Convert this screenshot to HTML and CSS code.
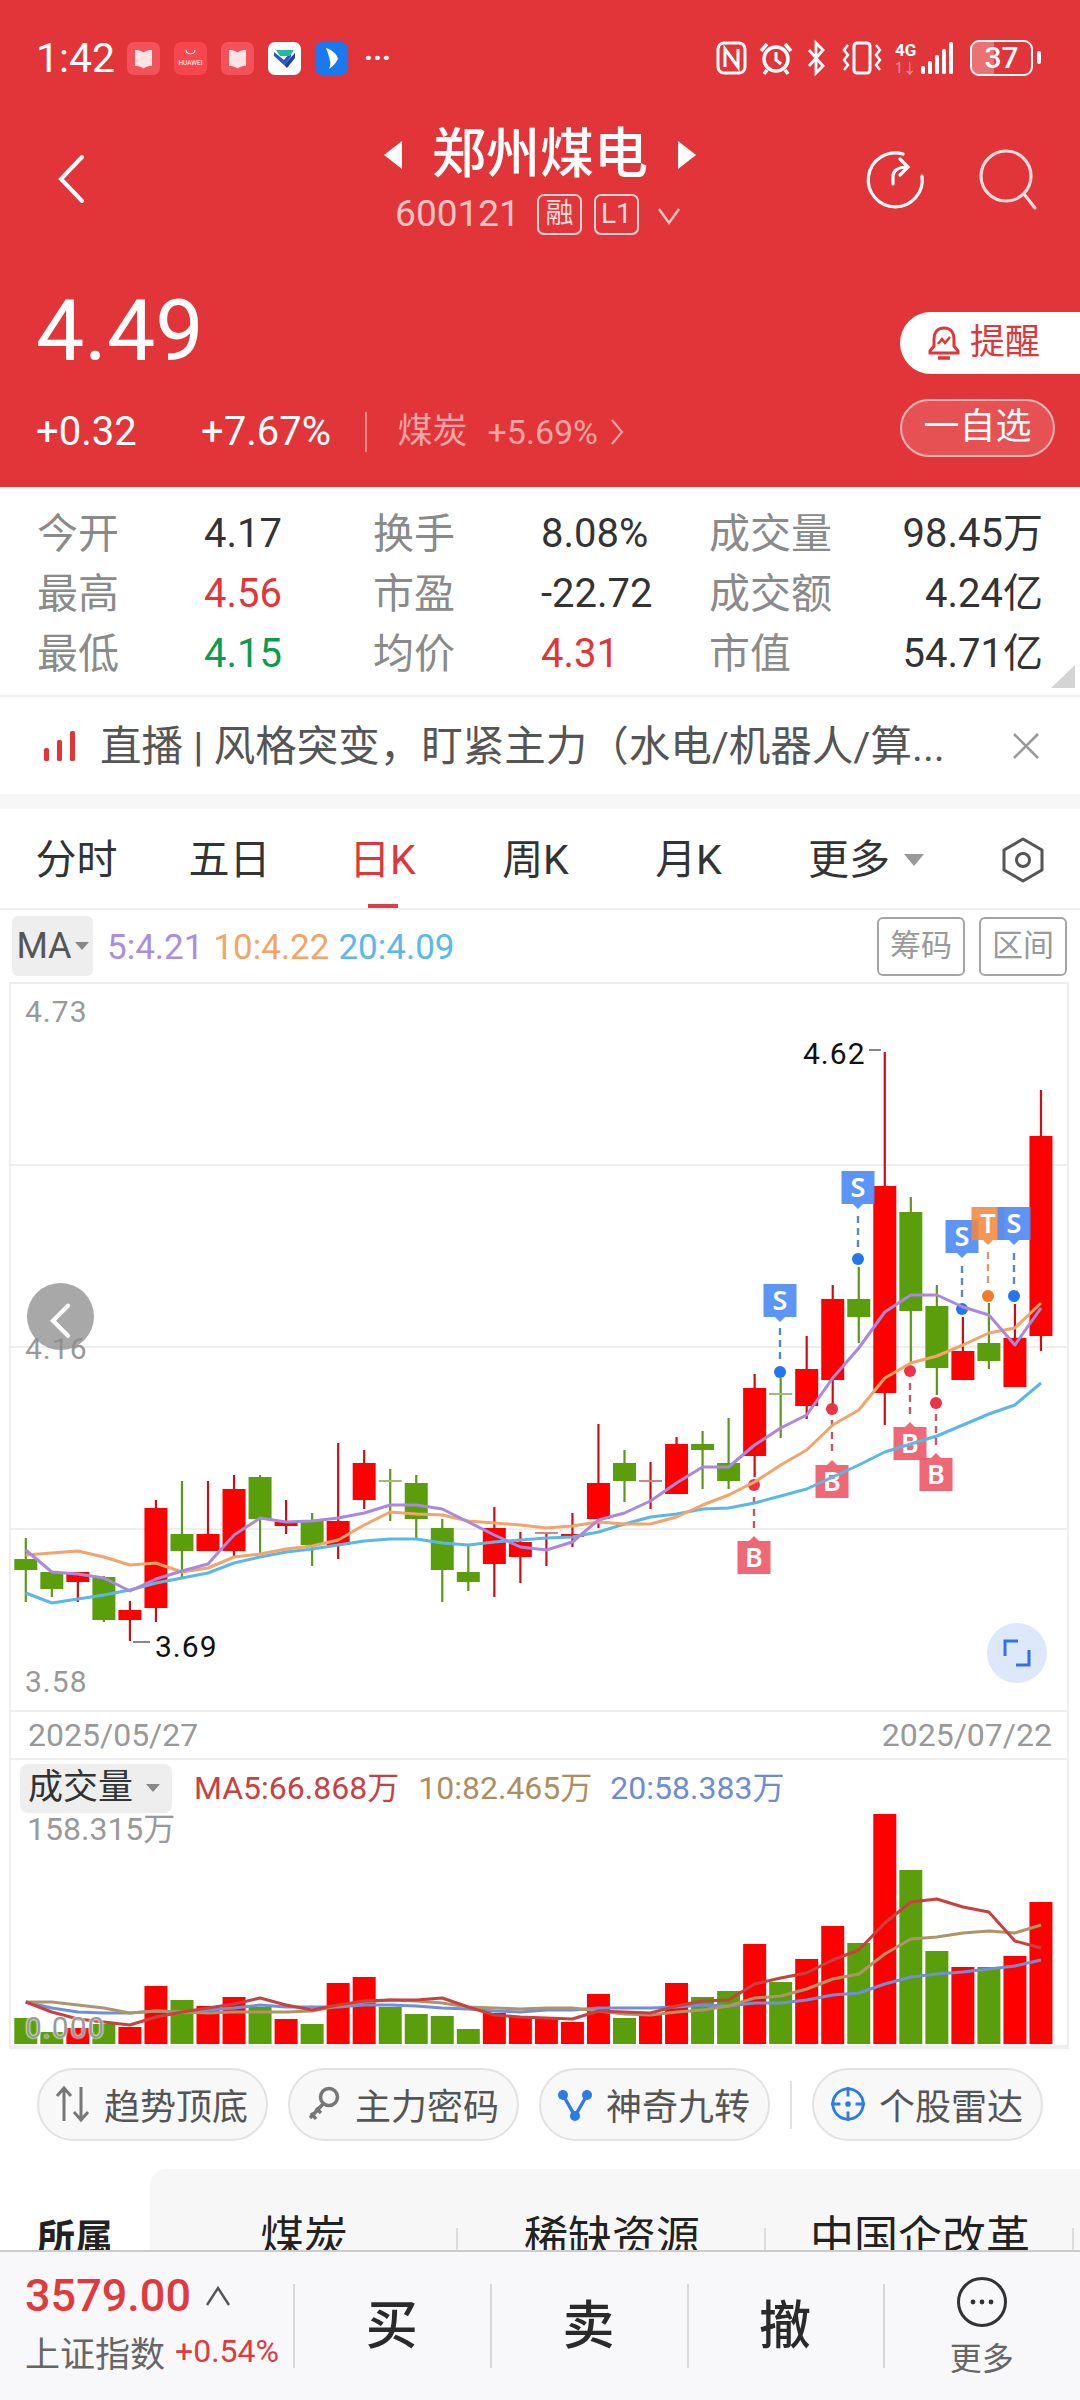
FILE: index.html
```html
<!DOCTYPE html>
<html lang="zh-CN">
<head>
  <meta charset="UTF-8" />
  <meta name="viewport" content="width=device-width, initial-scale=1.0" />
  <title>郑州煤电 600121</title>
  <link rel="stylesheet" href="styles.css">
</head>
<body>
  <!-- 红色行情头部 -->
  <header class="quote-head">
    <div class="status-bar">
      <span class="clock">1:42</span>
      <div class="app-icons">
        <svg class="app-icon" viewBox="0 0 33 33"><rect width="33" height="33" rx="7" fill="#f4525a"/><path d="M8 8c3 0 6 .5 8.500 2.500C19 8.500 22 8 25 8v16c-3 0-6 .5-8.500 2.500C14 24.500 11 24 8 24z" fill="#fbe3e3"/></svg>
        <svg class="app-icon" viewBox="0 0 33 33"><rect width="33" height="33" rx="7" fill="#f7464e"/><path d="M12 8c.5 5 8.500 5 9 0" fill="none" stroke="#fff" stroke-width="1.200"/><text x="16.500" y="23" class="huawei-text">HUAWEI</text></svg>
        <svg class="app-icon" viewBox="0 0 33 33"><rect width="33" height="33" rx="7" fill="#f4525a"/><path d="M8 8c3 0 6 .5 8.500 2.500C19 8.500 22 8 25 8v16c-3 0-6 .5-8.500 2.500C14 24.500 11 24 8 24z" fill="#fbe3e3"/></svg>
        <svg class="app-icon" viewBox="0 0 33 33"><rect width="33" height="33" rx="7" fill="#fff"/><path d="M6 14l10 9 7-8v-3c-3 1-5 3-7 6l-10-8z" fill="#2a56c6"/><path d="M8 8h18l-4 6H12z" fill="#27b8a4"/><path d="M16 23l11-12v5l-8 10z" fill="#1d3f9e"/></svg>
        <svg class="app-icon" viewBox="0 0 33 33"><rect width="33" height="33" rx="7" fill="#1a78f0"/><path d="M11 6c6 2 11 6 12 11-2 4-5 7-9 10 1-3 2-6 1-8-1-5-2-8-4-13z" fill="#fff"/></svg>
      </div>
      <span class="more-dots">···</span>
      <div class="sys-icons">
        <svg class="sys-nfc" viewBox="0 0 31 34"><rect x="2" y="2" width="27" height="30" rx="6" fill="none" stroke="#fff" stroke-width="3"/><path d="M9 26V8l13 18V8" fill="none" stroke="#fff" stroke-width="3"/></svg>
        <svg class="sys-alarm" viewBox="0 0 34 34"><circle cx="17" cy="18" r="12" fill="none" stroke="#fff" stroke-width="3.500"/><path d="M17 11v8l5 4" fill="none" stroke="#fff" stroke-width="3"/><path d="M2 10l6-7M32 10l-6-7M8 29l-3 4M26 29l3 4" stroke="#fff" stroke-width="3.500" fill="none"/></svg>
        <svg class="sys-bt" viewBox="0 0 18 34"><path d="M2 9l14 16-7 7V2l7 7L2 25" fill="none" stroke="#fff" stroke-width="2.800"/></svg>
        <svg class="sys-vib" viewBox="0 0 42 34"><rect x="13" y="2" width="16" height="30" rx="3" fill="none" stroke="#fff" stroke-width="3"/><path d="M7 4L3 9l4 5-4 5 4 5-4 5M35 4l4 5-4 5 4 5-4 5 4 5" fill="none" stroke="#fff" stroke-width="2.500"/></svg>
        <svg class="sys-signal" viewBox="0 0 60 34"><text x="0" y="15" class="net-text">4G</text><text x="0" y="32" class="net-sub">1↓</text><rect x="26" y="25" width="4" height="8" rx="1.500" fill="#fff"/><rect x="33" y="20" width="4" height="13" rx="1.500" fill="#fff"/><rect x="40" y="14" width="4" height="19" rx="1.500" fill="#fff"/><rect x="47" y="8" width="4" height="25" rx="1.500" fill="#fff"/><rect x="54" y="1" width="4" height="32" rx="1.500" fill="#fff"/></svg>
        <div class="battery"><span class="battery-level"></span><span class="battery-num">37</span></div>
      </div>
    </div>

    <div class="title-row">
      <svg class="nav-back" viewBox="0 0 30 50"><path d="M26 3L5 25l21 22" fill="none" stroke="#fff" stroke-width="4" stroke-linecap="round"/></svg>
      <div class="title-mid">
        <div class="stock-name"><i class="tri-left"></i>郑州煤电<i class="tri-right"></i></div>
        <div class="stock-code">600121<span class="code-tag">融</span><span class="code-tag">L1</span>
          <svg class="code-arrow" viewBox="0 0 24 18"><path d="M2 2l10 14L22 2" fill="none" stroke="#f8c4c4" stroke-width="2.400"/></svg>
        </div>
      </div>
      <div class="title-tools">
        <svg class="tool-share" viewBox="0 0 60 60"><path d="M38 6a27 27 0 1 0 19 22" fill="none" stroke="#fff" stroke-width="3.200" stroke-linecap="round"/><path d="M28 36v-8c0-5 5-9 14-9M35 11l8 8-8 8" fill="none" stroke="#fff" stroke-width="3.200" stroke-linecap="round"/></svg>
        <svg class="tool-search" viewBox="0 0 62 62"><circle cx="28" cy="28" r="25" fill="none" stroke="#fbdcdc" stroke-width="3.200"/><path d="M46 46l11 14" stroke="#fbdcdc" stroke-width="3.200" stroke-linecap="round"/></svg>
      </div>
    </div>

    <div class="price-row">
      <div class="price-left">
        <div class="last-price">4.49</div>
        <div class="change-row">
          <span class="chg-val">+0.32</span>
          <span class="chg-pct">+7.67%</span>
          <i class="chg-sep"></i>
          <span class="sector-name">煤炭</span>
          <span class="sector-pct">+5.69%</span>
          <svg class="sector-arrow" viewBox="0 0 14 28"><path d="M2 2l10 12L2 26" fill="none" stroke="#f8a8a8" stroke-width="2"/></svg>
        </div>
      </div>
      <div class="price-btns">
        <div class="btn-alert">
          <svg class="bell" viewBox="0 0 32 36"><path d="M16 3c-7 0-10 5-10 11v7l-4 5v2h28v-2l-4-5v-7c0-6-3-11-10-11z" fill="none" stroke="#e23539" stroke-width="3"/><path d="M10 33h12" stroke="#e23539" stroke-width="3.500"/><path d="M10 19l4-5 3 4 5-6" fill="none" stroke="#e23539" stroke-width="2.500"/></svg>
          <span>提醒</span>
        </div>
        <div class="btn-watch">一自选</div>
      </div>
    </div>
  </header>

  <!-- 盘口数据 -->
  <section class="stats">
    <span class="st-label">今开</span><span class="st-val">4.17</span>
    <span class="st-label">换手</span><span class="st-val">8.08%</span>
    <span class="st-label">成交量</span><span class="st-val st-right">98.45万</span>
    <span class="st-label">最高</span><span class="st-val up">4.56</span>
    <span class="st-label">市盈</span><span class="st-val">-22.72</span>
    <span class="st-label">成交额</span><span class="st-val st-right">4.24亿</span>
    <span class="st-label">最低</span><span class="st-val down">4.15</span>
    <span class="st-label">均价</span><span class="st-val up">4.31</span>
    <span class="st-label">市值</span><span class="st-val st-right">54.71亿</span>
    <i class="stats-corner"></i>
  </section>

  <section class="news">
    <svg class="news-bars" viewBox="0 0 32 30"><rect x="0" y="17" width="5" height="13" rx="1.500"/><rect x="13" y="9" width="5" height="21" rx="1.500"/><rect x="26" y="0" width="5" height="30" rx="1.500"/></svg>
    <span class="news-text">直播 | 风格突变，盯紧主力（水电/机器人/算...</span>
    <svg class="news-close" viewBox="0 0 28 28"><path d="M2 2l24 24M26 2L2 26" stroke="#999" stroke-width="2.600"/></svg>
  </section>
  <div class="gap-band"></div>

  <!-- 周期切换 -->
  <nav class="period-tabs">
    <span class="ptab">分时</span>
    <span class="ptab">五日</span>
    <span class="ptab active">日K</span>
    <span class="ptab">周K</span>
    <span class="ptab">月K</span>
    <span class="ptab ptab-more">更多<i class="more-tri"></i></span>
    <svg class="hex-icon" viewBox="0 0 44 46"><path d="M22 2l19 11v20L22 44 3 33V13z" fill="none" stroke="#555" stroke-width="3" stroke-linejoin="round"/><circle cx="22" cy="23" r="6.500" fill="none" stroke="#555" stroke-width="3"/></svg>
  </nav>

  <div class="ma-row">
    <div class="ma-chip">MA<i class="chip-tri"></i></div>
    <span class="ma-5">5:4.21</span>
    <span class="ma-10">10:4.22</span>
    <span class="ma-20">20:4.09</span>
    <span class="ma-btn ma-btn-first">筹码</span>
    <span class="ma-btn">区间</span>
  </div>

  <!-- K线图 -->
  <section class="kline-box">
    <svg id="klineSvg" class="chart-svg" viewBox="11 984 1056 726"></svg>
    <span class="axis-label axis-top">4.73</span>
    <span class="axis-label axis-mid">4.16</span>
    <span class="axis-label axis-low">3.58</span>
    <div class="float-back"><svg viewBox="0 0 20 30"><path d="M16 3L4 15l12 12" fill="none" stroke="#fff" stroke-width="3.400" stroke-linecap="round"/></svg></div>
    <div class="float-expand"><svg viewBox="0 0 28 28"><path d="M15 2H2v15M13 26h13V11" fill="none" stroke="#2f73e6" stroke-width="3"/></svg></div>
  </section>

  <div class="date-row"><span>2025/05/27</span><span>2025/07/22</span></div>

  <!-- 成交量 -->
  <section class="volume-box">
    <div class="vol-head">
      <div class="vol-chip">成交量<i class="chip-tri"></i></div>
      <span class="vol-ma5">MA5:66.868万</span>
      <span class="vol-ma10">10:82.465万</span>
      <span class="vol-ma20">20:58.383万</span>
    </div>
    <span class="vol-max">158.315万</span>
    <svg id="volumeSvg" class="chart-svg" viewBox="11 1760 1056 285"></svg>
    <span class="vol-zero">0.000</span>
  </section>

  <div class="pill-row">
    <div class="pill"><svg viewBox="0 0 36 38"><path d="M9 36V4M2 11l7-8 7 8M26 2v32M19 27l7 8 7-8" fill="none" stroke="#777" stroke-width="3"/></svg>趋势顶底</div>
    <div class="pill"><svg viewBox="0 0 36 38"><circle cx="23" cy="12" r="8.500" fill="none" stroke="#777" stroke-width="3.500"/><path d="M17 19L4 33M5 28l5 6M10 23l5 5" fill="none" stroke="#777" stroke-width="3.500"/></svg>主力密码</div>
    <div class="pill"><svg viewBox="0 0 36 38"><circle cx="6" cy="10" r="5" fill="#2b7be8"/><circle cx="30" cy="10" r="5" fill="#2b7be8"/><circle cx="18" cy="31" r="5" fill="#2b7be8"/><path d="M6 10l12 21 12-21" fill="none" stroke="#2b7be8" stroke-width="3.400"/></svg>神奇九转</div>
    <i class="pill-sep"></i>
    <div class="pill"><svg viewBox="0 0 38 38"><circle cx="19" cy="19" r="16" fill="none" stroke="#2b7be8" stroke-width="3"/><path d="M19 1v10M19 27v10M1 19h10M27 19h10" stroke="#2b7be8" stroke-width="3"/><circle cx="19" cy="19" r="3" fill="#2b7be8"/></svg>个股雷达</div>
  </div>

  <div class="concept-strip">
    <span class="concept-head">所属</span>
    <div class="concept-panel">
      <span class="concept-cell">煤炭</span>
      <span class="concept-cell">稀缺资源</span>
      <span class="concept-cell">中国企改革</span>
    </div>
  </div>

  <!-- 底部交易栏 -->
  <footer class="bottom-bar">
    <div class="index-cell">
      <div class="index-top"><span class="index-num">3579.00</span>
        <svg viewBox="0 0 26 22"><path d="M2 20L13 3l11 17" fill="none" stroke="#555" stroke-width="2.400"/></svg>
      </div>
      <div class="index-sub"><span class="index-name">上证指数</span><span class="index-pct">+0.54%</span></div>
    </div>
    <div class="trade-cell">买</div>
    <div class="trade-cell">卖</div>
    <div class="trade-cell">撤</div>
    <div class="more-cell">
      <svg viewBox="0 0 52 52"><circle cx="26" cy="26" r="23.500" fill="none" stroke="#333" stroke-width="3"/><circle cx="17" cy="26" r="2.400" fill="#333"/><circle cx="26" cy="26" r="2.400" fill="#333"/><circle cx="35" cy="26" r="2.400" fill="#333"/></svg>
      <span>更多</span>
    </div>
  </footer>

  <script src="script.js"></script>
</body>
</html>
```

FILE: styles.css
```css
/* 整页 1080 宽，字体统一 */
* { box-sizing: border-box; }
html, body { margin: 0; padding: 0; }
body {
  width: 1080px;
  height: 2400px;
  overflow: hidden;
  background: #fff;
  color: #333;
  font-family: Roboto, "Noto Sans CJK SC", sans-serif;
}
i { display: block; font-style: normal; }
svg { display: block; flex: none; overflow: visible; }

/* 头部 */
.quote-head {
  height: 487px;
  background: #e23539;
  color: #fff;
  overflow: hidden;
}
.status-bar {
  height: 116px;
  display: flex;
  align-items: center;
  padding-left: 36px;
}
.clock { width: 91px; font-size: 41px; line-height: 42px; }
.app-icons { display: flex; gap: 14px; }
.app-icon { width: 33px; height: 33px; }
.huawei-text { font-size: 6.500px; fill: #fff; text-anchor: middle; }
.more-dots { margin-left: 16px; font-size: 30px; line-height: 30px; font-weight: 700; }
.sys-icons { margin-left: auto; display: flex; align-items: center; padding-right: 47px; }
.sys-nfc { width: 31px; height: 34px; }
.sys-alarm { width: 34px; height: 34px; margin-left: 12px; }
.sys-bt { width: 18px; height: 34px; margin-left: 14px; }
.sys-vib { width: 42px; height: 34px; margin-left: 16px; }
.sys-signal { width: 60px; height: 34px; margin-left: 12px; }
.net-text { font-size: 17px; font-weight: 700; fill: #fff; }
.net-sub { font-size: 14px; fill: #f4a0a0; }
.battery {
  position: relative;
  width: 63px; height: 36px;
  margin-left: 15px;
  border: 2.500px solid #fff;
  border-radius: 9px;
  display: flex; align-items: center; justify-content: center;
}
.battery::after {
  content: "";
  position: absolute;
  right: -10px; top: 9px;
  width: 4px; height: 13px;
  background: #fff;
  border-radius: 2px;
}
.battery-level {
  position: absolute;
  left: 0; top: 0; bottom: 0;
  width: 37%;
  background: rgba(255,255,255,0.3);
  border-radius: 6px 0 0 6px;
}
.battery-num { position: relative; font-size: 30px; line-height: 30px; font-weight: 500; }

.title-row {
  height: 124px;
  display: grid;
  grid-template-columns: 1fr 330px 1fr;
  align-items: start;
}
.nav-back { width: 30px; height: 50px; margin: 38px 0 0 56px; }
.title-mid { display: flex; flex-direction: column; align-items: center; padding-top: 5px; }
.stock-name {
  display: flex; align-items: center;
  height: 68px;
  font-size: 54px;
  font-weight: 500;
  line-height: 68px;
}
.tri-left, .tri-right { width: 0; height: 0; border-top: 14px solid transparent; border-bottom: 14px solid transparent; }
.tri-left { border-right: 18px solid #fff; margin-right: 30px; }
.tri-right { border-left: 18px solid #fff; margin-left: 30px; }
.stock-code {
  display: flex; align-items: center;
  height: 44px;
  margin-top: 3px;
  margin-left: -4px;
  color: #f8c4c4;
  font-size: 37px;
  line-height: 44px;
}
.code-tag {
  width: 45px; height: 41px;
  margin-left: 12px;
  border: 2px solid #f8d4d4;
  border-radius: 7px;
  font-size: 28px;
  line-height: 36px;
  text-align: center;
  color: #fbdcdc;
}
.code-tag:first-of-type { margin-left: 17px; }
.code-arrow { width: 24px; height: 18px; margin-left: 18px; margin-top: 4px; }
.title-tools { display: flex; align-items: flex-start; justify-content: flex-end; padding-right: 40px; }
.tool-share { width: 60px; height: 60px; margin-top: 32px; }
.tool-search { width: 62px; height: 62px; margin-left: 53px; margin-top: 32px; }

.price-row { display: flex; justify-content: space-between; }
.price-left { padding-left: 36px; }
.last-price { height: 101px; margin-top: 40px; font-size: 86px; line-height: 101px; font-weight: 400; }
.change-row { display: flex; align-items: center; height: 46px; margin-top: 28px; }
.chg-val { width: 165px; font-size: 40px; line-height: 46px; }
.chg-pct { width: 164px; font-size: 40px; line-height: 46px; }
.chg-sep { width: 1.500px; height: 40px; background: #f08a8a; }
.sector-name { margin-left: 31px; color: #f6a5a5; font-size: 35px; line-height: 46px; }
.sector-pct { margin-left: 20px; color: #f6a5a5; font-size: 34px; line-height: 46px; }
.sector-arrow { width: 14px; height: 28px; margin-left: 12px; }
.price-btns { width: 180px; margin-top: 72px; }
.btn-alert {
  height: 62px;
  display: flex; align-items: center;
  padding-left: 28px;
  background: #fff;
  border-radius: 31px 0 0 31px;
  color: #e23539;
  font-size: 35px;
  line-height: 62px;
}
.bell { width: 32px; height: 36px; margin-right: 10px; }
.btn-watch {
  width: 155px; height: 58px;
  margin-top: 25px;
  background: rgba(255,255,255,0.14);
  border: 2px solid #f6b4b4;
  border-radius: 29px;
  font-size: 36px;
  line-height: 52px;
  text-align: center;
}

/* 盘口 */
.stats {
  position: relative;
  height: 210px;
  padding: 17px 37px 0;
  display: grid;
  grid-template-columns: 167px 169px 168px 168px 1fr 170px;
  grid-auto-rows: 60px;
  align-items: center;
  border-bottom: 2px solid #eee;
  font-size: 41px;
}
.stats span { line-height: 60px; white-space: nowrap; }
.st-label { color: #8a8a8a; }
.st-val { color: #333; font-size: 40px; }
.st-right { text-align: right; }
.st-val.up { color: #e23539; }
.st-val.down { color: #0e9a50; }
.stats-corner {
  position: absolute;
  right: 5px; bottom: 7px;
  width: 0; height: 0;
  border-left: 24px solid transparent;
  border-bottom: 23px solid #d4d4d4;
}

.news { height: 97px; display: flex; align-items: center; padding-left: 44px; }
.news-bars { width: 32px; height: 30px; fill: #e23539; }
.news-text { margin-left: 24px; width: 896px; padding-top: 2px; font-size: 41.500px; line-height: 50px; color: #555; white-space: nowrap; }
.news-close { width: 28px; height: 28px; margin-left: 16px; }
.gap-band { height: 15px; background: #f7f7f7; }

/* 周期 tab */
.period-tabs {
  position: relative;
  height: 101px;
  display: flex;
  align-items: center;
  border-bottom: 2px solid #eee;
  font-size: 41px;
}
.ptab { width: 153px; padding-top: 3px; display: flex; align-items: center; justify-content: center; line-height: 52px; color: #333; white-space: nowrap; }
.ptab.active { position: relative; color: #e23539; }
.ptab.active::after {
  content: "";
  position: absolute;
  left: calc(50% - 15px); bottom: -22px;
  width: 30px; height: 4px;
  background: #d9404c;
}
.ptab-more { width: auto; padding-left: 43px; }
.more-tri {
  width: 0; height: 0;
  margin-left: 14px;
  border-left: 10px solid transparent;
  border-right: 10px solid transparent;
  border-top: 12px solid #999;
}
.hex-icon { position: absolute; right: 35px; top: 28px; width: 44px; height: 46px; }

.ma-row {
  height: 72px;
  display: flex;
  align-items: center;
  padding-left: 12px;
  font-size: 35px;
}
.ma-chip {
  width: 81px; height: 60px;
  display: flex; align-items: center; justify-content: center;
  background: #eee;
  border-radius: 6px;
  color: #555;
  font-size: 36px;
  line-height: 60px;
}
.chip-tri {
  width: 0; height: 0;
  margin-left: 3px;
  border-left: 7px solid transparent;
  border-right: 7px solid transparent;
  border-top: 8px solid #888;
}
.ma-5 { margin-left: 14px; padding-top: 2px; color: #a98ee0; }
.ma-10 { margin-left: 10px; padding-top: 2px; color: #f3a566; }
.ma-20 { margin-left: 9px; padding-top: 2px; color: #5ab8ea; }
.ma-btn {
  width: 88px; height: 59px;
  margin-left: 14px;
  border: 2px solid #a4a4a4;
  border-radius: 6px;
  color: #999;
  font-size: 31px;
  line-height: 54px;
  text-align: center;
}
.ma-btn-first { margin-left: auto; }
.ma-btn:last-child { margin-right: 13px; }

/* 图表 */
.kline-box {
  position: relative;
  width: 1060px;
  height: 730px;
  margin-left: 9px;
  border: 2px solid #eee;
  overflow: hidden;
}
.chart-svg { width: 1056px; }
#klineSvg { height: 726px; overflow: hidden; }
.axis-label { position: absolute; left: 14px; font-size: 30px; line-height: 30px; letter-spacing: 1px; color: #999; }
.axis-top { top: 13px; }
.axis-mid { top: 350px; }
.axis-low { top: 683px; }
.float-back {
  position: absolute;
  left: 16px; top: 299px;
  width: 67px; height: 67px;
  padding: 19px 21px;
  border-radius: 50%;
  background: rgba(140,140,140,0.76);
}
.float-expand {
  position: absolute;
  left: 976px; top: 639px;
  width: 60px; height: 60px;
  padding: 16px;
  border-radius: 50%;
  background: #dde8fb;
}
.k-text { font-size: 30px; letter-spacing: 1px; font-family: Roboto, sans-serif; fill: #111; }
.k-tick { stroke: #888; stroke-width: 2; }
.grid-line { stroke: #eee; stroke-width: 2; }
.wick-up { stroke: #cf0d12; stroke-width: 2.200; }
.wick-down { stroke: #5e961c; stroke-width: 2.200; }
.body-up { fill: #ff0000; }
.body-down { fill: #5a9e0c; }
.doji-up { stroke: #cf8484; stroke-width: 2; }
.doji-down { stroke: #9dbd74; stroke-width: 2; }
.ma-line { fill: none; stroke-width: 3; stroke-linejoin: round; }
.line-ma5 { stroke: #a988dd; }
.line-ma10 { stroke: #f2a46a; }
.line-ma20 { stroke: #5ab8e8; }
.line-vma5 { stroke: #c8403f; }
.line-vma10 { stroke: #b09468; }
.line-vma20 { stroke: #6f8fd8; }
.mark-s { fill: #4f8cf5; opacity: 0.92; }
.mark-t { fill: #f5883c; opacity: 0.88; }
.mark-b { fill: #ef5a69; opacity: 0.92; }
.mark-text { font-size: 27px; font-weight: 600; fill: #fff; text-anchor: middle; font-family: "Noto Sans", sans-serif; }
.dash-s { stroke: #5a8ab5; stroke-width: 2.400; stroke-dasharray: 7 5; }
.dash-t { stroke: #d99a6c; stroke-width: 2.400; stroke-dasharray: 7 5; }
.dash-b { stroke: #b85c6c; stroke-width: 2.400; stroke-dasharray: 7 5; }
.dot-s { fill: #2277ee; }
.dot-t { fill: #f57a23; }
.dot-b { fill: #ee3344; }

.date-row {
  height: 46px;
  margin: 0 11px 0 9px;
  padding: 0 15px 0 17px;
  display: flex;
  justify-content: space-between;
  align-items: center;
  border-left: 2px solid #eee;
  border-right: 2px solid #eee;
  font-size: 32px;
  line-height: 44px;
  color: #999;
}

.volume-box {
  position: relative;
  width: 1060px;
  height: 291px;
  margin-left: 9px;
  border: 2px solid #eee;
  border-bottom-width: 4px;
}
#volumeSvg { height: 285px; overflow: hidden; }
.vol-head {
  position: absolute;
  left: 9px; top: 3px;
  display: flex;
  align-items: center;
  font-size: 32px;
  line-height: 50px;
  white-space: nowrap;
}
.vol-chip {
  width: 152px; height: 49px;
  display: flex; align-items: center;
  padding-left: 8px;
  background: #eee;
  border-radius: 8px;
  color: #333;
  font-size: 35px;
}
.vol-chip .chip-tri { margin-left: 13px; }
.vol-ma5 { margin-left: 22px; color: #c9413f; }
.vol-ma10 { margin-left: 19px; color: #ab8f62; }
.vol-ma20 { margin-left: 18px; color: #6e8bd6; }
.vol-max { position: absolute; left: 16px; top: 52px; font-size: 32px; line-height: 34px; color: #999; z-index: 1; }
.vol-zero { position: absolute; left: 14px; top: 251px; font-size: 30px; line-height: 34px; letter-spacing: 1px; color: #999; text-shadow: 0 0 2px #fff, 0 0 2px #fff; }

/* 工具按钮 */
.pill-row {
  height: 73px;
  margin-top: 19px;
  padding-left: 37px;
  display: flex;
  align-items: center;
}
.pill {
  width: 231px; height: 73px;
  margin-right: 20px;
  padding-bottom: 2px;
  display: flex;
  align-items: center;
  justify-content: center;
  gap: 13px;
  background: #f8f8f8;
  border: 2px solid #e2e2e2;
  border-radius: 37px;
  color: #555;
  font-size: 36px;
  white-space: nowrap;
}
.pill svg { width: 36px; height: 38px; margin-left: -2px; }
.pill-sep { width: 2px; height: 48px; margin-right: 20px; background: #e2e2e2; }

.concept-strip {
  height: 81px;
  margin-top: 28px;
  display: flex;
  overflow: hidden;
}
.concept-head { width: 150px; padding: 44px 0 0 37px; font-size: 38px; line-height: 50px; font-weight: 700; color: #222; }
.concept-panel {
  flex: 1;
  display: flex;
  padding-top: 39px;
  background: #f7f7f7;
  border-radius: 16px 0 0 0;
}
.concept-cell {
  position: relative;
  width: 308px; height: 60px;
  font-size: 44px;
  line-height: 60px;
  text-align: center;
  color: #222;
  white-space: nowrap;
}
.concept-cell::after {
  content: "";
  position: absolute;
  right: 0; top: 20px;
  width: 2px; height: 40px;
  background: #ddd;
}

/* 底部栏 */
.bottom-bar {
  height: 151px;
  display: flex;
  background: #f8f8fa;
  border-top: 2px solid #ccc;
}
.index-cell { width: 294px; padding: 18px 0 0 25px; }
.index-top { display: flex; align-items: center; height: 52px; }
.index-num { font-size: 45px; line-height: 52px; font-weight: 500; color: #e03a3e; }
.index-top svg { width: 26px; height: 22px; margin-left: 14px; }
.index-sub { display: flex; align-items: center; height: 44px; margin-top: 7px; white-space: nowrap; }
.index-name { font-size: 35px; color: #666; }
.index-pct { margin-left: 10px; font-size: 32px; color: #e03a3e; }
.trade-cell, .more-cell { position: relative; width: 197px; text-align: center; }
.trade-cell { padding-top: 42px; font-size: 52px; line-height: 66px; font-weight: 500; color: #2a2a2a; }
.trade-cell::before, .more-cell::before {
  content: "";
  position: absolute;
  left: 0; top: 32px;
  width: 2px; height: 84px;
  background: #d8d8d8;
}
.more-cell { display: flex; flex-direction: column; align-items: center; padding-top: 24px; }
.more-cell svg { width: 52px; height: 52px; }
.more-cell span { margin-top: 11px; font-size: 32px; line-height: 40px; color: #666; }
```

FILE: script.js
```js
const NS = 'http://www.w3.org/2000/svg';
const kSvg = document.getElementById('klineSvg');
const vSvg = document.getElementById('volumeSvg');

// 每根K线: [涨跌, 最高, 实体上, 实体下, 最低] 都是页面y坐标
const candles = [
  ['d',1538,1559,1570,1602],['d',1572,1572,1589,1597],['u',1572,1572,1582,1602],['d',1576,1577,1620,1622],
  ['u',1601,1610,1620,1641],['u',1500,1508,1608,1622],['d',1481,1534,1551,1577],['u',1481,1534,1551,1551],
  ['u',1475,1489,1551,1557],['d',1475,1477,1519,1553],['u',1500,1522,1526,1534],['d',1513,1521,1545,1566],
  ['u',1443,1521,1545,1559],['u',1450,1463,1500,1509],['d',1469,1481,1481,1521],['d',1475,1483,1519,1538],
  ['d',1519,1528,1570,1602],['d',1546,1572,1582,1591],['u',1507,1528,1564,1597],['u',1532,1542,1557,1583],
  ['u',1532,1533,1533,1566],['u',1513,1534,1537,1547],['u',1424,1483,1519,1528],['d',1450,1463,1481,1502],
  ['u',1462,1481,1481,1509],['u',1437,1444,1494,1494],['d',1431,1444,1450,1489],['d',1418,1463,1481,1489],
  ['u',1374,1388,1456,1477],['d',1378,1394,1394,1438],['u',1336,1369,1406,1419],['u',1285,1299,1380,1405],
  ['d',1267,1299,1317,1343],['u',1052,1186,1393,1425],['d',1197,1212,1311,1363],['d',1285,1306,1368,1395],
  ['u',1317,1351,1380,1380],['d',1303,1343,1361,1369],['u',1304,1338,1387,1387],['u',1090,1136,1336,1351]
];

const ma5 = [1550,1572,1574,1578,1591,1579,1571,1564,1535,1518,1522,1521,1518,1513,1505,1505,1509,1522,1535,1547,1550,1542,1520,1513,1501,1483,1467,1467,1445,1428,1415,1378,1348,1312,1295,1295,1307,1315,1345,1308];
const ma10 = [1555,1553,1551,1557,1565,1563,1572,1568,1557,1554,1549,1546,1540,1525,1512,1514,1515,1521,1523,1525,1528,1526,1522,1524,1524,1517,1505,1495,1482,1465,1450,1425,1410,1378,1363,1356,1345,1333,1328,1303];
const ma20 = [1593,1603,1599,1595,1590,1583,1578,1573,1563,1557,1552,1549,1545,1541,1539,1539,1543,1545,1542,1540,1538,1537,1532,1524,1517,1514,1509,1508,1503,1496,1489,1477,1465,1452,1444,1436,1425,1414,1405,1383];

const volTops = [2018,2032,2028,2024,2027,1986,2000,2006,1997,2007,2019,2024,1983,1977,2007,2014,2016,2029,2013,2017,2017,2022,1994,2018,2015,1983,1997,1991,1944,1982,1959,1926,1943,1814,1870,1951,1967,1967,1956,1902];
const volMa5 = [2002,2012,2019,2022,2025,2017,2012,2008,2004,1998,2005,2010,2005,2001,2000,2000,1998,2007,2015,2017,2018,2019,2011,2012,2013,2006,2001,2000,1984,1978,1973,1960,1950,1923,1902,1899,1907,1912,1941,1948];
const volMa10 = [2002,2002,2005,2008,2013,2011,2012,2013,2012,2012,2012,2011,2006,2002,2000,2001,2003,2007,2008,2009,2008,2008,2011,2014,2015,2012,2010,2006,1998,1996,1989,1979,1974,1954,1939,1937,1933,1931,1933,1925];
const volMa20 = [2002,2008,2012,2013,2013,2011,2012,2010,2008,2005,2007,2007,2007,2005,2005,2006,2008,2009,2011,2012,2010,2010,2008,2008,2008,2007,2005,2006,2003,2003,2000,1995,1993,1984,1977,1974,1972,1969,1966,1960];

const VOL_BASE = 2044;
const BAR_W = 23;
const centerX = i => 25.8 + 26.03 * i;

function el(parent, tag, attrs, text) {
  const node = document.createElementNS(NS, tag);
  for (const k in attrs) node.setAttribute(k, attrs[k]);
  if (text) node.textContent = text;
  parent.appendChild(node);
  return node;
}

function drawLine(svg, data, cls) {
  const pts = data.map((y, i) => centerX(i).toFixed(1) + ',' + y).join(' ');
  el(svg, 'polyline', { points: pts, class: 'ma-line ' + cls });
}

// 网格线
[1165, 1347, 1529].forEach(y => {
  el(kSvg, 'line', { x1: 11, x2: 1067, y1: y, y2: y, class: 'grid-line' });
});

// K线
candles.forEach((c, i) => {
  const x = centerX(i);
  const side = c[0] === 'u' ? 'up' : 'down';
  el(kSvg, 'line', { x1: x, x2: x, y1: c[1], y2: c[4], class: 'wick-' + side });
  if (c[2] === c[3]) {
    el(kSvg, 'line', { x1: x - BAR_W / 2, x2: x + BAR_W / 2, y1: c[2], y2: c[2], class: 'doji-' + side });
  } else {
    el(kSvg, 'rect', { x: x - BAR_W / 2, y: c[2], width: BAR_W, height: c[3] - c[2], class: 'body-' + side });
  }
});

// 买卖标记: [类型, x, 方块上沿, 虚线起, 虚线止, 圆点y]
const marks = [
  ['s', 780, 1284, 1328, 1362, 1372],
  ['s', 858, 1171, 1216, 1250, 1259],
  ['s', 962, 1220, 1266, 1300, 1309],
  ['t', 988, 1207, 1252, 1285, 1296],
  ['s', 1014, 1207, 1253, 1288, 1296],
  ['b', 754, 1541, 1497, 1531, 1485],
  ['b', 832, 1465, 1420, 1455, 1409],
  ['b', 910, 1427, 1383, 1417, 1371],
  ['b', 936, 1458, 1414, 1450, 1403]
];
marks.forEach(m => {
  const t = m[0], x = m[1], top = m[2];
  el(kSvg, 'line', { x1: x, x2: x, y1: m[3], y2: m[4], class: 'dash-' + t });
  el(kSvg, 'circle', { cx: x, cy: m[5], r: 6, class: 'dot-' + t });
  const pts = t === 'b'
    ? [[x - 16.5, top], [x - 5, top], [x, top - 5], [x + 5, top], [x + 16.5, top], [x + 16.5, top + 33], [x - 16.5, top + 33]]
    : [[x - 16.5, top], [x + 16.5, top], [x + 16.5, top + 33], [x + 5, top + 33], [x, top + 38], [x - 5, top + 33], [x - 16.5, top + 33]];
  el(kSvg, 'polygon', { points: pts.map(p => p.join(',')).join(' '), class: 'mark-' + t });
  el(kSvg, 'text', { x: x, y: top + 26, class: 'mark-text' }, t.toUpperCase());
});

drawLine(kSvg, ma20, 'line-ma20');
drawLine(kSvg, ma10, 'line-ma10');
drawLine(kSvg, ma5, 'line-ma5');

// 最高最低标注
el(kSvg, 'text', { x: 803, y: 1064, class: 'k-text' }, '4.62');
el(kSvg, 'line', { x1: 869, x2: 881, y1: 1050, y2: 1050, class: 'k-tick' });
el(kSvg, 'text', { x: 155, y: 1657, class: 'k-text' }, '3.69');
el(kSvg, 'line', { x1: 133, x2: 150, y1: 1642, y2: 1642, class: 'k-tick' });

// 成交量
volTops.forEach((top, i) => {
  const side = candles[i][0] === 'u' ? 'up' : 'down';
  el(vSvg, 'rect', { x: centerX(i) - BAR_W / 2, y: top, width: BAR_W, height: VOL_BASE - top, class: 'body-' + side });
});
drawLine(vSvg, volMa20, 'line-vma20');
drawLine(vSvg, volMa10, 'line-vma10');
drawLine(vSvg, volMa5, 'line-vma5');
```
